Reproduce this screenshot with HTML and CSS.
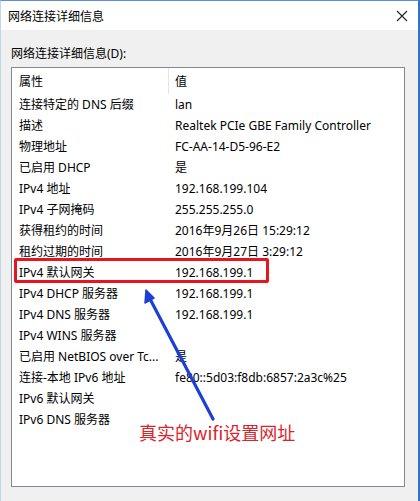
FILE: index.html
```html
<!DOCTYPE html>
<html lang="zh-CN">
<head>
    <meta charset="UTF-8">
    <title>网络连接详细信息</title>
    <link rel="stylesheet" href="styles.css">
</head>
<body>

<div class="window">
    <div class="titlebar">
        <span class="title">网络连接详细信息</span>
        <svg class="close" width="12" height="12" viewBox="0 0 12 12">
            <path d="M1 1L11 11M11 1L1 11" stroke="#222" stroke-width="1.1" fill="none"/>
        </svg>
    </div>

    <div class="content">
        <div class="label">网络连接详细信息(D):</div>
        <div class="listbox">
            <div class="row header">
                <div class="cell key">属性</div>
                <div class="cell val">值</div>
            </div>
            <div class="row"><div class="cell key">连接特定的 DNS 后缀</div><div class="cell val">lan</div></div>
            <div class="row"><div class="cell key">描述</div><div class="cell val">Realtek PCIe GBE Family Controller</div></div>
            <div class="row"><div class="cell key">物理地址</div><div class="cell val">FC-AA-14-D5-96-E2</div></div>
            <div class="row"><div class="cell key">已启用 DHCP</div><div class="cell val">是</div></div>
            <div class="row"><div class="cell key">IPv4 地址</div><div class="cell val">192.168.199.104</div></div>
            <div class="row"><div class="cell key">IPv4 子网掩码</div><div class="cell val">255.255.255.0</div></div>
            <div class="row"><div class="cell key">获得租约的时间</div><div class="cell val">2016年9月26日 15:29:12</div></div>
            <div class="row"><div class="cell key">租约过期的时间</div><div class="cell val">2016年9月27日 3:29:12</div></div>
            <div class="row"><div class="cell key">IPv4 默认网关</div><div class="cell val">192.168.199.1</div></div>
            <div class="row"><div class="cell key">IPv4 DHCP 服务器</div><div class="cell val">192.168.199.1</div></div>
            <div class="row"><div class="cell key">IPv4 DNS 服务器</div><div class="cell val">192.168.199.1</div></div>
            <div class="row"><div class="cell key">IPv4 WINS 服务器</div><div class="cell val"></div></div>
            <div class="row"><div class="cell key">已启用 NetBIOS over Tc...</div><div class="cell val">是</div></div>
            <div class="row"><div class="cell key">连接-本地 IPv6 地址</div><div class="cell val">fe80::5d03:f8db:6857:2a3c%25</div></div>
            <div class="row"><div class="cell key">IPv6 默认网关</div><div class="cell val"></div></div>
            <div class="row"><div class="cell key">IPv6 DNS 服务器</div><div class="cell val"></div></div>
        </div>
    </div>

    <!-- annotations drawn over the screenshot -->
    <div class="mark-box"></div>
    <svg class="mark-arrow" width="420" height="501" viewBox="0 0 420 501">
        <line x1="213" y1="419" x2="149" y2="297" stroke="#1d3fd6" stroke-width="3.2" stroke-linecap="round"/>
        <path d="M146 290 L145 303 L154 298 Z" fill="#1d3fd6" stroke="#1d3fd6" stroke-width="1.5" stroke-linejoin="round"/>
    </svg>
    <div class="mark-text">真实的wifi设置网址</div>
</div>

</body>
</html>
```

FILE: styles.css
```css
body {
    margin: 0;
    font-family: "Noto Sans", "Noto Sans CJK SC", sans-serif;
    font-size: 12px;
    color: #000;
    background-color: #f0f0f0;
}

.window {
    position: relative;
    width: 420px;
    height: 501px;
    box-sizing: border-box;
    border-top: 1px solid #5b8fd0;
    border-left: 1px solid #c3d6ee;
    border-right: 2px solid #2f74c8;
    background-color: #f0f0f0;
    overflow: hidden;
}

.titlebar {
    height: 29px;
    background-color: #fff;
    display: flex;
    align-items: center;
    justify-content: space-between;
    padding: 0 10px 0 7px;
}

.title {
    font-size: 12px;
}

.content {
    padding: 14px 11px 0 10px;
}

.label {
    line-height: 20px;
    margin-bottom: 3px;
}

.listbox {
    width: 394px;
    height: 420px;
    box-sizing: border-box;
    border: 1px solid #828790;
    background-color: #fff;
}

.row {
    display: grid;
    grid-template-columns: 156px 1fr;
    height: 21px;
    line-height: 22px;
    white-space: nowrap;
}

.row.header {
    height: 26px;
    line-height: 27px;
}

.cell {
    padding-left: 7px;
    overflow: hidden;
}

.header .val {
    border-left: 1px solid #e5e5e5;
    padding-left: 6px;
}

.mark-box {
    position: absolute;
    left: 13px;
    top: 257px;
    width: 249px;
    height: 19px;
    border: 3px solid #e8151c;
    border-radius: 2px;
}

.mark-arrow {
    position: absolute;
    left: -1px;
    top: -1px;
}

.mark-text {
    position: absolute;
    left: 138px;
    top: 419px;
    font-family: "Noto Sans CJK SC", sans-serif;
    font-size: 18px;
    line-height: 24px;
    color: #d9242c;
}
```
